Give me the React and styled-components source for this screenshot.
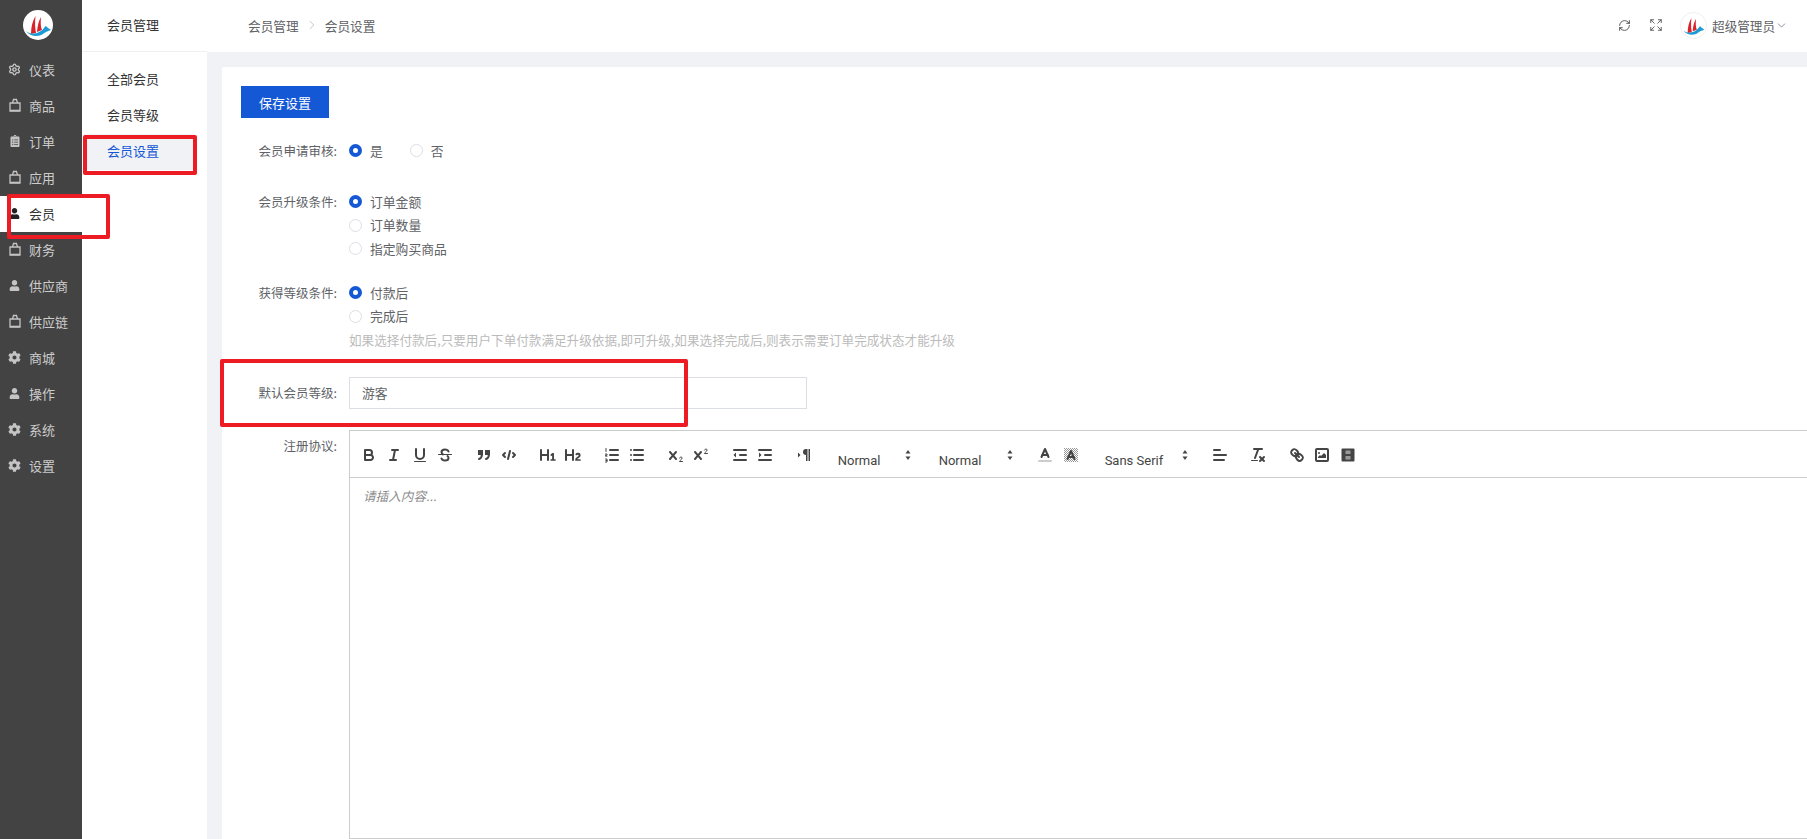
import React from "react";
import styled, { createGlobalStyle } from "styled-components";
import { FaCog, FaUser, FaClipboardList } from "react-icons/fa";
import { Settings, ChevronRight, ChevronDown, RefreshCw, Expand } from "lucide-react";

const GlobalStyle = createGlobalStyle`
  html, body {
    margin: 0;
    height: 100%;
    overflow: hidden;
    background: #f0f2f5;
    font-family: "Noto Sans CJK SC", "Liberation Sans", sans-serif;
    font-size: 13px;
  }
  #root { height: 100%; }
`;

const Page = styled.div`
  display: flex;
  height: 839px;
  width: 1807px;
  position: relative;
  overflow: hidden;
`;

const Sidebar = styled.aside`
  width: 82px;
  flex: none;
  background: #434343;
`;

const LogoBox = styled.div`
  height: 52px;
  display: flex;
  justify-content: center;
  padding: 10px 7px 0 0;
  box-sizing: border-box;
`;

const NavItem = styled.div`
  height: 36px;
  display: flex;
  align-items: center;
  padding-bottom: 2px;
  box-sizing: border-box;
  color: ${(p) => (p.$active ? "#333" : "#ccc")};
  background: ${(p) => (p.$active ? "#fff" : "transparent")};
`;

const NavIcon = styled.span`
  width: 29px;
  flex: none;
  display: flex;
  justify-content: center;
  box-sizing: border-box;
  color: ${(p) => (p.$active ? "#222" : "#c4c4c4")};
`;

const SubMenu = styled.aside`
  width: 125px;
  flex: none;
  background: #fff;
`;

const SubTitle = styled.div`
  height: 52px;
  line-height: 49px;
  padding-left: 25px;
  color: #333;
  border-bottom: 1px solid #eef0f4;
  box-sizing: border-box;
`;

const SubList = styled.div`
  padding-top: 10px;
`;

const SubItem = styled.div`
  height: 36px;
  line-height: 34px;
  padding-left: 25px;
  color: ${(p) => (p.$active ? "#1558d6" : "#333")};
  background: ${(p) => (p.$active ? "#f0f2f5" : "transparent")};
  ${(p) => p.$active && "width: 88px; margin-left: 2px; padding-left: 23px;"}
`;

const Main = styled.main`
  flex: 1;
  min-width: 0;
  display: flex;
  flex-direction: column;
`;

const Header = styled.header`
  height: 52px;
  flex: none;
  background: #fff;
  display: flex;
  align-items: center;
  padding: 0 19px 2px 41px;
  box-sizing: border-box;
`;

const Crumb = styled.span`
  color: #606266;
  font-size: 12.7px;
`;

const CrumbSep = styled.span`
  display: flex;
  width: 26px;
  justify-content: center;
  color: #a8adb8;
`;

const HeaderRight = styled.div`
  margin-left: auto;
  display: flex;
  align-items: center;
`;

const HeaderIcon = styled.span`
  display: flex;
  width: 31px;
  justify-content: center;
  color: #444;
`;

const Avatar = styled.span`
  width: 27px;
  height: 27px;
  margin-left: 9px;
  margin-right: 5px;
  border-radius: 50%;
  border: 1px solid #eee;
  box-sizing: border-box;
  display: flex;
  align-items: center;
  justify-content: center;
  background: #fff;
  overflow: hidden;
`;

const UserName = styled.span`
  color: #606266;
  font-size: 12.6px;
`;

const Content = styled.div`
  flex: 1;
  min-height: 0;
  padding: 15px 0 0 15px;
`;

const Card = styled.section`
  height: 100%;
  box-sizing: border-box;
  background: #fff;
  border-radius: 2px 0 0 0;
  padding: 19px 0 0 19px;
  overflow: hidden;
`;

const SaveButton = styled.button`
  display: block;
  width: 88px;
  height: 32px;
  padding: 0;
  border: 0;
  background: #1558d6;
  color: #fff;
  font: inherit;
`;

const FormRow = styled.div`
  display: flex;
  align-items: flex-start;
  margin-top: ${(p) => p.$top}px;
`;

const Label = styled.label`
  width: 96px;
  flex: none;
  margin-right: 12px;
  text-align: right;
  color: #606266;
  font-size: 12.5px;
  white-space: nowrap;
  line-height: ${(p) => p.$lh || 23.5}px;
  ${(p) => p.$pad && `padding-top: ${p.$pad}px;`}
`;

const RadioInline = styled.div`
  display: flex;
  gap: 27px;
`;

const RadioStack = styled.div`
  display: flex;
  flex-direction: column;
`;

const RadioItem = styled.div`
  height: 23.5px;
  display: flex;
  align-items: center;
  gap: 8px;
  color: #606266;
  font-size: 12.8px;
`;

const RadioText = styled.span`
  position: relative;
  top: -0.5px;
`;

const RadioDot = styled.span`
  width: 13px;
  height: 13px;
  flex: none;
  box-sizing: border-box;
  border-radius: 50%;
  background: #fff;
  border: ${(p) => (p.$on ? "4.5px solid #1558d6" : "1px solid #dcdee6")};
`;

const Hint = styled.div`
  margin-left: 108px;
  height: 24px;
  line-height: 23px;
  color: #bbb;
  font-size: 12.6px;
  white-space: nowrap;
`;

const TextInput = styled.div`
  width: 458px;
  height: 32px;
  line-height: 30px;
  box-sizing: border-box;
  border: 1px solid #dcdee6;
  padding-left: 12px;
  color: #606266;
  font-size: 12.8px;
`;

const Editor = styled.div`
  width: 1500px;
  flex: none;
  height: 409px;
  box-sizing: border-box;
  border: 1px solid #ccc;
`;

const Toolbar = styled.div`
  height: 47px;
  box-sizing: border-box;
  border-bottom: 1px solid #ccc;
  padding: 15px 0 0 6.5px;
  display: flex;
  align-items: flex-start;
  gap: 13.4px;
  font-family: Roboto, "Liberation Sans", sans-serif;
`;

const ToolGroup = styled.div`
  display: flex;
`;

const ToolButton = styled.span`
  width: 25.3px;
  height: 18px;
  display: flex;
  justify-content: center;

  svg {
    width: 18px;
    height: 18px;
    fill: none;
    stroke: #444;
    stroke-width: 2;
    stroke-linecap: round;
    stroke-linejoin: round;
  }
  .fill { fill: #444; stroke: none; }
  .thin { stroke-width: 1; }
  .light { stroke: #ccc; }
  .dot { fill: #999; stroke: none; }
`;

const Picker = styled.div`
  width: ${(p) => p.$width}px;
  height: 18px;
  display: flex;
  justify-content: space-between;
  color: #444;
  font-size: 13px;
  padding-left: ${(p) => p.$pad}px;
  box-sizing: border-box;

  span {
    line-height: 18px;
    padding-top: 6px;
  }
  svg {
    width: 18px;
    height: 18px;
    fill: #444;
  }
`;

const EditorBody = styled.div`
  padding: 8px 13px;
  line-height: 20px;
  color: #8c8c8c;
  font-size: 12.6px;
  font-style: italic;
`;

const Annotation = styled.div`
  position: absolute;
  left: ${(p) => p.$x}px;
  top: ${(p) => p.$y}px;
  width: ${(p) => p.$w}px;
  height: ${(p) => p.$h}px;
  box-sizing: border-box;
  border: 4px solid #ed1c24;
  border-radius: 2px;
  pointer-events: none;
`;

const Logo = ({ size }) => (
  <svg width={size} height={size} viewBox="0 0 30 30">
    <circle cx="15" cy="15" r="15" fill="#fff" />
    <path d="M8 24C8 17 9.500 11 12.500 6C11.800 12 12 18 13 23Z" fill="#d8232a" />
    <path d="M14 22C14.500 16 15.500 11 18 7C17.500 12 17.500 17 19 20Z" fill="#d8232a" />
    <path d="M3 21C8 25 13 24 18 21C21 19 22 16 23 16C24 17 26 19 28 20C25 21 22 22 20 24C16 27 7 27 3 21Z" fill="#1b9ad6" />
  </svg>
);

const BagIcon = () => (
  <svg width="12" height="14" viewBox="0 0 12 14" fill="none" stroke="currentColor" strokeWidth="1.3">
    <path d="M1 5h10v8H1z" />
    <path d="M3.500 5L4.500 1.500h3L8.500 5" />
    <path d="M1 12.500h10" strokeWidth="1.600" />
  </svg>
);

const iconFor = {
  gauge: <Settings size={13} strokeWidth={2.6} />,
  bag: <BagIcon />,
  order: <FaClipboardList size={12} />,
  user: <FaUser size={11} />,
  gear: <FaCog size={13} />,
};

const navItems = [
  { name: "仪表", icon: "gauge" },
  { name: "商品", icon: "bag" },
  { name: "订单", icon: "order" },
  { name: "应用", icon: "bag" },
  { name: "会员", icon: "user", active: true },
  { name: "财务", icon: "bag" },
  { name: "供应商", icon: "user" },
  { name: "供应链", icon: "bag" },
  { name: "商城", icon: "gear" },
  { name: "操作", icon: "user" },
  { name: "系统", icon: "gear" },
  { name: "设置", icon: "gear" },
];

const xMark =
  "M9.65,5.241a1,1,0,0,0-1.409.108L6,7.964,3.759,5.349A1,1,0,0,0,2.192,6.59178Q2.2,6.6,2.241,6.651L4.684,9.5,2.241,12.35A1,1,0,0,0,3.71,13.70722q0.025-.02739.049-0.05722L6,11.036,8.241,13.65a1,1,0,1,0,1.567-1.24277Q9.8,12.4,9.759,12.35L7.316,9.5,9.759,6.651A1,1,0,0,0,9.65,5.241Z";

const tools = {
  bold: (
    <>
      <path d="M5,4H9.5A2.5,2.5,0,0,1,12,6.5v0A2.5,2.5,0,0,1,9.5,9H5V4Z" />
      <path d="M5,9h5.5A2.5,2.5,0,0,1,13,11.5v0A2.5,2.5,0,0,1,10.5,14H5V9Z" />
    </>
  ),
  italic: (
    <>
      <line x1="7" x2="13" y1="4" y2="4" />
      <line x1="5" x2="11" y1="14" y2="14" />
      <line x1="8" x2="10" y1="14" y2="4" />
    </>
  ),
  underline: (
    <>
      <path d="M5,3V9a4,4,0,0,0,8,0V3" />
      <rect className="fill" x="3" y="15" width="12" height="1" rx=".5" />
    </>
  ),
  strike: (
    <>
      <line className="thin" x1="15.5" x2="2.5" y1="8.5" y2="8.5" />
      <path d="M12.5,5.5C12,4.2,10.6,3.5,9,3.5c-2,0-3.5,1-3.5,2.5,0,1,.6,1.8,1.5,2.5" />
      <path d="M5.5,12.5c.5,1.3,1.9,2,3.5,2,2,0,3.5-1,3.5-2.5,0-.8-.3-1.5-1-2" />
    </>
  ),
  quote: (
    <>
      <rect className="fill" x="3" y="4" width="5" height="5" />
      <rect className="fill" x="10" y="4" width="5" height="5" />
      <path d="M7,8c0,4.031-3,5-3,5" />
      <path d="M14,8c0,4.031-3,5-3,5" />
    </>
  ),
  code: (
    <>
      <polyline points="5 7 3 9 5 11" />
      <polyline points="13 7 15 9 13 11" />
      <line x1="10" x2="8" y1="5" y2="13" />
    </>
  ),
  h1: (
    <path
      className="fill"
      d="M10,4V14a1,1,0,0,1-2,0V10H3v4a1,1,0,0,1-2,0V4A1,1,0,0,1,3,4V8H8V4a1,1,0,0,1,2,0Zm6.06787,9.209H14.98975V7.59863a.54085.54085,0,0,0-.605-.60547h-.62744a1.01119,1.01119,0,0,0-.748.29688L11.645,8.56641a.5435.5435,0,0,0-.022.8584l.28613.30762a.53861.53861,0,0,0,.84717.0332l.09912-.08789a1.2137,1.2137,0,0,0,.2417-.35254h.02246s-.01123.30859-.01123.60547V13.209H12.041a.54085.54085,0,0,0-.605.60547v.43945a.54085.54085,0,0,0,.605.60547h4.02686a.54085.54085,0,0,0,.605-.60547v-.43945A.54085.54085,0,0,0,16.06787,13.209Z"
    />
  ),
  h2: (
    <path
      className="fill"
      d="M16.73975,13.81445v.43945a.54085.54085,0,0,1-.605.60547H11.855a.58392.58392,0,0,1-.64893-.60547V14.0127c0-2.90527,3.39941-3.42187,3.39941-4.55469a.77675.77675,0,0,0-.84717-.78125,1.17684,1.17684,0,0,0-.83594.38477c-.2749.26367-.561.374-.85791.13184l-.4292-.34082c-.30811-.24219-.38525-.51758-.1543-.81445a2.97155,2.97155,0,0,1,2.45361-1.17676,2.45393,2.45393,0,0,1,2.68408,2.40918c0,2.45312-3.1792,2.92676-3.27832,3.93848h2.79443A.54085.54085,0,0,1,16.73975,13.81445ZM9,3A.99974.99974,0,0,0,8,4V8H3V4A1,1,0,0,0,1,4V14a1,1,0,0,0,2,0V10H8v4a1,1,0,0,0,2,0V4A.99974.99974,0,0,0,9,3Z"
    />
  ),
  ol: (
    <>
      <line x1="7" x2="15" y1="4" y2="4" />
      <line x1="7" x2="15" y1="9" y2="9" />
      <line x1="7" x2="15" y1="14" y2="14" />
      <line className="thin" x1="3" x2="3" y1="2.5" y2="5.5" />
      <path className="thin" d="M2.5,8h1.5v1.2h-1.5v1h1.5" />
      <path className="thin" d="M2.5,13h1.5v3h-1.5M3,14.5h1" />
    </>
  ),
  ul: (
    <>
      <line x1="6" x2="15" y1="4" y2="4" />
      <line x1="6" x2="15" y1="9" y2="9" />
      <line x1="6" x2="15" y1="14" y2="14" />
      <line x1="3" x2="3" y1="4" y2="4" />
      <line x1="3" x2="3" y1="9" y2="9" />
      <line x1="3" x2="3" y1="14" y2="14" />
    </>
  ),
  sub: (
    <>
      <path className="fill" d={xMark} />
      <path className="thin" d="M12.5,12c.2-1.2,2.6-1.4,2.6.1,0,1.3-2.6,2.3-2.6,3.4h3" />
    </>
  ),
  sup: (
    <>
      <path className="fill" d={xMark} />
      <path className="thin" d="M12.5,4c.2-1.2,2.6-1.4,2.6.1,0,1.3-2.6,2.3-2.6,3.4h3" />
    </>
  ),
  outdent: (
    <>
      <line x1="3" x2="15" y1="14" y2="14" />
      <line x1="3" x2="15" y1="4" y2="4" />
      <line x1="9" x2="15" y1="9" y2="9" />
      <polygon className="fill" points="5 6.500 5 11.500 2.500 9 5 6.500" />
    </>
  ),
  indent: (
    <>
      <line x1="3" x2="15" y1="14" y2="14" />
      <line x1="3" x2="15" y1="4" y2="4" />
      <line x1="9" x2="15" y1="9" y2="9" />
      <polygon className="fill" points="3 6.500 3 11.500 5.500 9 3 6.500" />
    </>
  ),
  direction: (
    <>
      <polygon className="fill" points="3 11.500 5.500 9 3 6.500 3 11.500" />
      <path className="fill" d="M11,3a3,3,0,0,0,0,6h1V3H11Z" />
      <rect className="fill" x="11" y="3" width="1.500" height="12" />
      <rect className="fill" x="13.500" y="3" width="1.500" height="12" />
    </>
  ),
  color: (
    <>
      <line className="light" x1="3" x2="15" y1="15" y2="15" />
      <polyline points="5.5 11 9 3 12.5 11" />
      <line x1="11.63" x2="6.38" y1="9" y2="9" />
    </>
  ),
  background: (
    <>
      <defs>
        <pattern id="dots" width="2" height="2" patternUnits="userSpaceOnUse">
          <rect className="dot" width="1" height="1" />
          <rect className="dot" x="1" y="1" width="1" height="1" />
        </pattern>
      </defs>
      <rect x="2" y="2" width="14" height="14" fill="url(#dots)" style={{ stroke: "none", fill: "url(#dots)" }} />
      <polyline points="5.5 13 9 5 12.5 13" />
      <line x1="11.63" x2="6.38" y1="11" y2="11" />
    </>
  ),
  align: (
    <>
      <line x1="3" x2="15" y1="9" y2="9" />
      <line x1="3" x2="13" y1="14" y2="14" />
      <line x1="3" x2="9" y1="4" y2="4" />
    </>
  ),
  clean: (
    <>
      <line x1="5" x2="13" y1="3" y2="3" />
      <line x1="6" x2="9.35" y1="12" y2="3" />
      <line x1="11" x2="15" y1="11" y2="15" />
      <line x1="15" x2="11" y1="11" y2="15" />
      <rect className="fill" x="2" y="14" width="7" height="1" rx=".5" />
    </>
  ),
  link: (
    <>
      <line x1="7" x2="11" y1="7" y2="11" />
      <path d="M8.9,4.577a3.476,3.476,0,0,1,.36,4.679A3.476,3.476,0,0,1,4.577,8.9C3.185,7.5,2.035,6.4,4.217,4.217S7.5,3.185,8.9,4.577Z" />
      <path d="M13.423,9.1a3.476,3.476,0,0,0-4.679-.36,3.476,3.476,0,0,0,.36,4.679c1.392,1.392,2.5,2.542,4.679.36S14.815,10.5,13.423,9.1Z" />
    </>
  ),
  image: (
    <>
      <rect x="3" y="3" width="12" height="12" rx="1" />
      <circle className="fill" cx="6" cy="7" r="1" />
      <polygon className="fill" points="5 12 5 11 7 9 8 10 11 7 13 9 13 12 5 12" />
    </>
  ),
  video: (
    <>
      <rect className="fill" x="2.5" y="2.5" width="13" height="13" rx="1" />
      <rect className="dot" x="6.5" y="4.5" width="5" height="3.5" />
      <rect className="dot" x="6.5" y="10" width="5" height="3.5" />
    </>
  ),
};

const Tool = ({ name }) => (
  <ToolButton>
    <svg viewBox="0 0 18 18">{tools[name]}</svg>
  </ToolButton>
);

const PickerBox = ({ label, width, pad }) => (
  <Picker $width={width} $pad={pad}>
    <span>{label}</span>
    <svg viewBox="0 0 18 18">
      <polygon points="6.500 10.500 9 14 11.500 10.500" />
      <polygon points="6.500 7.500 9 4 11.500 7.500" />
    </svg>
  </Picker>
);

const Radio = ({ on, children }) => (
  <RadioItem>
    <RadioDot $on={on} />
    <RadioText>{children}</RadioText>
  </RadioItem>
);

const groups = [
  ["bold", "italic", "underline", "strike"],
  ["quote", "code"],
  ["h1", "h2"],
  ["ol", "ul"],
  ["sub", "sup"],
  ["outdent", "indent"],
  ["direction"],
];

const App = () => (
  <Page>
    <GlobalStyle />
    <Sidebar>
      <LogoBox>
        <Logo size={30} />
      </LogoBox>
      {navItems.map((item) => (
        <NavItem key={item.name} $active={item.active}>
          <NavIcon $active={item.active}>{iconFor[item.icon]}</NavIcon>
          {item.name}
        </NavItem>
      ))}
    </Sidebar>

    <SubMenu>
      <SubTitle>会员管理</SubTitle>
      <SubList>
        <SubItem>全部会员</SubItem>
        <SubItem>会员等级</SubItem>
        <SubItem $active>会员设置</SubItem>
      </SubList>
    </SubMenu>

    <Main>
      <Header>
        <Crumb>会员管理</Crumb>
        <CrumbSep>
          <ChevronRight size={14} strokeWidth={1.2} />
        </CrumbSep>
        <Crumb>会员设置</Crumb>
        <HeaderRight>
          <HeaderIcon>
            <RefreshCw size={13} strokeWidth={1.6} />
          </HeaderIcon>
          <HeaderIcon>
            <Expand size={14} strokeWidth={1.4} />
          </HeaderIcon>
          <Avatar>
            <Logo size={25} />
          </Avatar>
          <UserName>超级管理员</UserName>
          <ChevronDown size={13} strokeWidth={1.2} color="#515a6e" />
        </HeaderRight>
      </Header>

      <Content>
        <Card>
          <SaveButton>保存设置</SaveButton>

          <FormRow $top={21}>
            <Label>会员申请审核:</Label>
            <RadioInline>
              <Radio on>是</Radio>
              <Radio>否</Radio>
            </RadioInline>
          </FormRow>

          <FormRow $top={27.5}>
            <Label>会员升级条件:</Label>
            <RadioStack>
              <Radio on>订单金额</Radio>
              <Radio>订单数量</Radio>
              <Radio>指定购买商品</Radio>
            </RadioStack>
          </FormRow>

          <FormRow $top={20.5}>
            <Label>获得等级条件:</Label>
            <RadioStack>
              <Radio on>付款后</Radio>
              <Radio>完成后</Radio>
            </RadioStack>
          </FormRow>
          <Hint>如果选择付款后,只要用户下单付款满足升级依据,即可升级,如果选择完成后,则表示需要订单完成状态才能升级</Hint>

          <FormRow $top={25}>
            <Label $lh={32}>默认会员等级:</Label>
            <TextInput>游客</TextInput>
          </FormRow>

          <FormRow $top={21}>
            <Label $pad={4} $lh={24}>注册协议:</Label>
            <Editor>
              <Toolbar>
                {groups.map((group) => (
                  <ToolGroup key={group[0]}>
                    {group.map((name) => (
                      <Tool key={name} name={name} />
                    ))}
                  </ToolGroup>
                ))}
                <PickerBox label="Normal" width={87.6} pad={8} />
                <PickerBox label="Normal" width={88.6} pad={8} />
                <ToolGroup>
                  <Tool name="color" />
                  <Tool name="background" />
                </ToolGroup>
                <PickerBox label="Sans Serif" width={97} pad={8} />
                <ToolGroup>
                  <Tool name="align" />
                </ToolGroup>
                <ToolGroup>
                  <Tool name="clean" />
                </ToolGroup>
                <ToolGroup>
                  <Tool name="link" />
                  <Tool name="image" />
                  <Tool name="video" />
                </ToolGroup>
              </Toolbar>
              <EditorBody>请插入内容...</EditorBody>
            </Editor>
          </FormRow>
        </Card>
      </Content>
    </Main>

    <Annotation $x={7} $y={194} $w={103} $h={45} />
    <Annotation $x={83} $y={135} $w={114} $h={40} />
    <Annotation $x={220} $y={359} $w={468} $h={68} />
  </Page>
);

export default App;
